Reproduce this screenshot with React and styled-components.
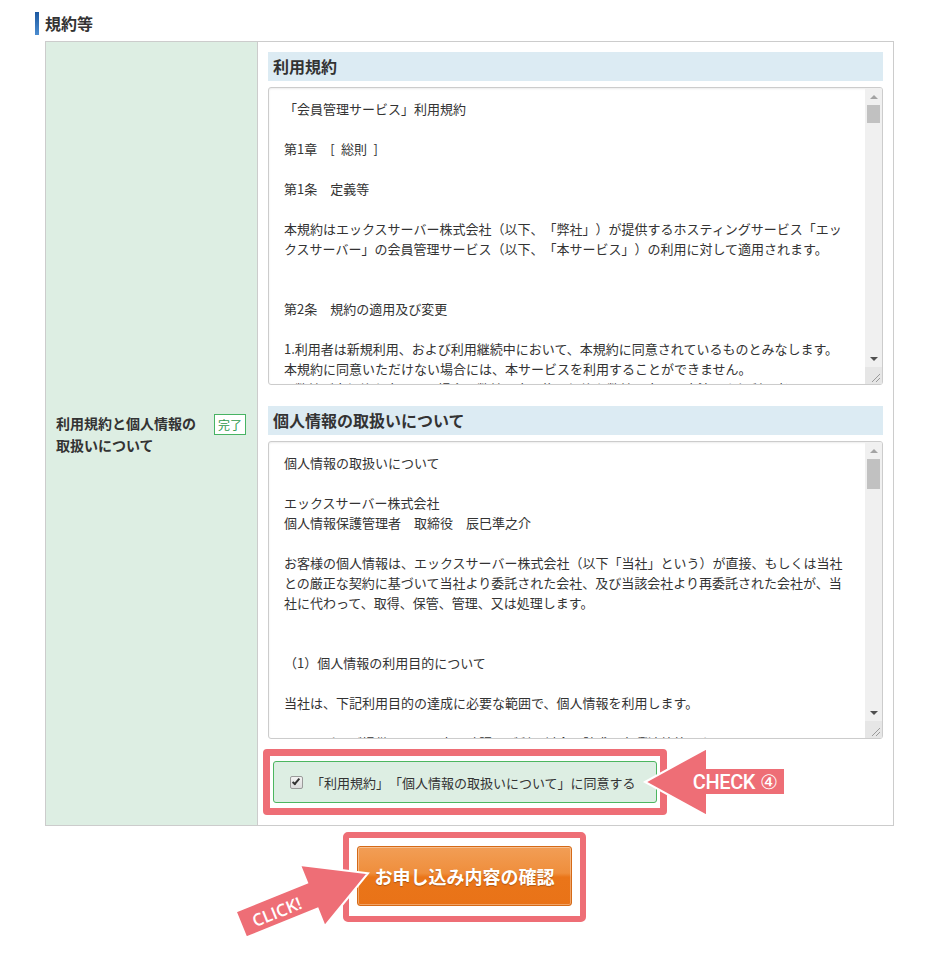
import React from "react";
import styled, { createGlobalStyle } from "styled-components";

const GlobalStyle = createGlobalStyle`
  html, body { margin: 0; padding: 0; background: #fff; }
  body {
    font-family: "Noto Sans CJK JP", "Noto Sans", sans-serif;
    color: #333;
    text-spacing-trim: space-all;
  }
  *, *::before, *::after { box-sizing: border-box; }
`;

const Page = styled.div`
  width: 929px;
  padding: 12px 0 40px;
`;

const SectionTitle = styled.h2`
  margin: 0 0 6px 35px;
  height: 23px;
  display: flex;
  align-items: center;
  gap: 6px;
  font-size: 16px;
  font-weight: bold;
  line-height: 23px;
  color: #333;
  &::before {
    content: "";
    width: 4px;
    height: 23px;
    background: linear-gradient(#1b58a0, #4c8dd0);
  }
`;

const Table = styled.div`
  margin-left: 45px;
  width: 849px;
  display: grid;
  grid-template-columns: 212px 1fr;
  border: 1px solid #ccc;
`;

const LabelCell = styled.div`
  background: #ddeee3;
  border-right: 1px solid #ccc;
  padding: 0 11px 0 10px;
  display: flex;
  align-items: center;
`;

const LabelRow = styled.div`
  flex: 1;
  display: flex;
  align-items: flex-start;
  justify-content: space-between;
`;

const LabelText = styled.div`
  width: 146px;
  font-size: 14px;
  font-weight: bold;
  line-height: 22px;
  color: #333;
`;

const Badge = styled.span`
  margin-top: 2px;
  padding: 0 3px;
  font-size: 12px;
  line-height: 19px;
  color: #2f9a4c;
  border: 1px solid #47b363;
  background: #fff;
`;

const ContentCell = styled.div`
  padding: 10px;
  display: flex;
  flex-direction: column;
`;

const TermsBlock = styled.section`
  display: flex;
  flex-direction: column;
  & + & { margin-top: 21px; }
`;

const BlockTitle = styled.h3`
  margin: 0 0 6px;
  height: 29px;
  padding: 0 5px;
  background: #dcebf3;
  font-size: 16px;
  font-weight: bold;
  line-height: 29px;
  color: #333;
`;

const TextFrame = styled.div`
  display: flex;
  height: 298px;
  border: 1px solid #ccc;
  border-radius: 3px;
  overflow: hidden;
  background: #fff;
  box-shadow: inset 0 1px 2px rgba(0, 0, 0, 0.08);
`;

const TermsText = styled.textarea`
  flex: 1;
  min-width: 0;
  display: block;
  margin: 0;
  padding: 11px 10px 10px 15px;
  border: none;
  font-family: "Noto Sans CJK JP", "Noto Sans", sans-serif;
  font-size: 13px;
  line-height: 20px;
  color: #333;
  background: transparent;
  resize: none;
  outline: none;
  overflow: hidden;
  text-spacing-trim: space-all;
`;

const ScrollBar = styled.div`
  width: 17px;
  display: flex;
  flex-direction: column;
  background: #f0f0f0;
`;

const ScrollArrow = styled.div`
  height: 17px;
  display: flex;
  align-items: center;
  justify-content: center;
  &::before {
    content: "";
    border-left: 4px solid transparent;
    border-right: 4px solid transparent;
    ${(p) =>
      p.$dir === "up"
        ? `border-bottom: 4px solid ${p.$on ? "#505050" : "#a3a3a3"};`
        : `border-top: 4px solid ${p.$on ? "#505050" : "#a3a3a3"};`}
  }
`;

const ScrollThumb = styled.div`
  height: ${(p) => p.$size}px;
  margin: 0 2px;
  background: #c1c1c1;
`;

const ScrollSpace = styled.div`
  flex: 1;
`;

const ResizeCorner = styled.div`
  height: 17px;
  background: #e6e6e6;
  display: flex;
  align-items: flex-end;
  justify-content: flex-end;
`;

const AgreeHighlight = styled.div`
  position: relative;
  align-self: flex-start;
  margin: 10px 0 0 -5px;
  padding: 5px 3px;
  border: 7px solid #ee6e76;
  border-radius: 4px;
  background: #fff;
`;

const AgreeLabel = styled.label`
  display: flex;
  align-items: center;
  gap: 8px;
  height: 42px;
  padding: 0 20px 0 16px;
  background: #ddeee3;
  border: 1px solid #4cb660;
  border-radius: 3px;
  font-size: 13px;
  color: #333;
  white-space: nowrap;
`;

const Check = styled.input`
  appearance: none;
  position: relative;
  margin: 0;
  width: 13px;
  height: 13px;
  border: 1px solid #9a9a9a;
  border-radius: 2px;
  background: linear-gradient(#f2f2f2, #dcdcdc);
  &:checked::after {
    content: "";
    position: absolute;
    left: 3px;
    top: 0px;
    width: 4px;
    height: 8px;
    border: solid #333;
    border-width: 0 2px 2px 0;
    transform: rotate(40deg);
  }
`;

const ActionArea = styled.div`
  display: flex;
  justify-content: center;
  padding-top: 6px;
`;

const ButtonHighlight = styled.div`
  position: relative;
  padding: 8px 8px 10px;
  border: 6px solid #ee6e76;
  border-radius: 5px;
  background: #fff;
`;

const ConfirmButton = styled.button`
  display: block;
  width: 215px;
  height: 60px;
  padding: 0;
  border: 1px solid #d56a17;
  border-radius: 3px;
  background: linear-gradient(#f29e56 0%, #ef8e3c 45%, #ea7519 52%, #e97318 100%);
  box-shadow: inset 0 0 0 1px rgba(255, 255, 255, 0.35);
  color: #fff;
  font-family: "Noto Sans CJK JP", "Noto Sans", sans-serif;
  font-size: 18px;
  font-weight: bold;
  text-shadow: 0 1px 1px rgba(0, 0, 0, 0.25);
  cursor: pointer;
`;

const Callout = styled.svg`
  position: absolute;
  left: ${(p) => p.$left}px;
  top: ${(p) => p.$top}px;
  overflow: visible;
  pointer-events: none;
  z-index: 2;
`;

const CalloutText = styled.text`
  fill: #fff;
  font-family: ${(p) => p.$font};
  font-size: ${(p) => p.$size}px;
  font-weight: ${(p) => p.$weight};
  letter-spacing: ${(p) => p.$ls || 0}px;
`;

const TERMS_HEAD = `「会員管理サービス」利用規約

第1章　[\u2002総則\u2002]

第1条　定義等

本規約はエックスサーバー株式会社（以下、「弊社」）が提供するホスティングサービス「エッ
クスサーバー」の会員管理サービス（以下、「本サービス」）の利用に対して適用されます。


第2条　規約の適用及び変更

1.利用者は新規利用、および利用継続中において、本規約に同意されているものとみなします。
本規約に同意いただけない場合には、本サービスを利用することができません。
2.弊社が本規約を変更する場合、弊社は変更後の規約を弊社の定める方法により利用者に
通知するものとします。
3.変更後の規約は、前項の通知がなされた時点より効力を生じるものとします。
`;

const ARTICLE_TITLES = [
  "会員管理サービス",
  "会員ID及びパスワードの管理",
  "登録情報の変更",
  "料金及び支払方法",
  "禁止事項",
  "サービスの停止",
  "サービスの変更及び廃止",
  "免責事項",
  "損害賠償",
  "個人情報の取扱い",
  "通知方法",
  "権利義務の譲渡禁止",
  "契約の解除",
  "反社会的勢力の排除",
  "準拠法及び管轄裁判所",
];

const TERMS =
  TERMS_HEAD +
  ARTICLE_TITLES.map(
    (t, i) => `

第${i + 3}条　${t}

1.利用者は、本条に定める事項を遵守し、弊社の定める手続きに従うものとします。
2.弊社は、必要と判断した場合、利用者に対し事前に通知することなく、
本条に定める内容を変更することができるものとします。
3.前各項に定めのない事項については、弊社が別途定めるところによるものとします。
4.利用者が本条に違反した場合、弊社は本サービスの利用を停止することができます。`
  ).join("") +
  `


附則
本規約は、2015年4月1日より施行します。
`;

const PRIVACY_HEAD = `個人情報の取扱いについて

エックスサーバー株式会社
個人情報保護管理者　取締役　辰巳準之介

お客様の個人情報は、エックスサーバー株式会社（以下「当社」という）が直接、もしくは当社
との厳正な契約に基づいて当社より委託された会社、及び当該会社より再委託された会社が、当
社に代わって、取得、保管、管理、又は処理します。


（1）個人情報の利用目的について

当社は、下記利用目的の達成に必要な範囲で、個人情報を利用します。

・サービスご提供に関する本人確認、ご利用料金の請求、各種連絡等のため
・サービスに関するお問い合わせ、ご相談への対応のため
・新サービスや機能追加等に関する情報提供のため
`;

const PRIVACY_SECTIONS = [
  "個人情報の第三者提供について",
  "個人情報の委託について",
  "個人情報の開示等の請求について",
  "個人情報を提供されることの任意性について",
  "本人が容易に認識できない方法による個人情報の取得",
  "お問い合わせ窓口",
];

const PRIVACY =
  PRIVACY_HEAD +
  PRIVACY_SECTIONS.map(
    (t, i) => `


（${i + 2}）${t}

当社は、法令に定める場合を除き、お客様の同意なく個人情報を第三者に提供しません。
お客様は、当社に対してご自身の個人情報の開示等の請求を行うことができます。
請求にあたっては、当社所定の手続きに従い、ご本人であることを確認させていただきます。`
  ).join("") +
  `
`;

function ScrollText({ value, thumb }) {
  return (
    <TextFrame>
      <TermsText readOnly value={value} />
      <ScrollBar aria-hidden="true">
        <ScrollArrow $dir="up" />
        <ScrollThumb $size={thumb} />
        <ScrollSpace />
        <ScrollArrow $dir="down" $on />
        <ResizeCorner>
          <svg width="17" height="17" viewBox="0 0 17 17">
            <path d="M15 7 L7 15 M15 11 L11 15" stroke="#9a9a9a" strokeWidth="1" fill="none" />
          </svg>
        </ResizeCorner>
      </ScrollBar>
    </TextFrame>
  );
}

function ClickArrow() {
  return (
    <Callout $left={-119} $top={18} width="150" height="95" viewBox="0 0 150 95">
      <g transform="translate(11 68.5) rotate(-22)">
        <polygon
          points="0,-14 77,-14 77,-33 137,0 77,33 77,14 0,14"
          fill="#ee6e76"
          stroke="#fff"
          strokeWidth="2"
        />
        <CalloutText
          x="38"
          y="1.5"
          textAnchor="middle"
          dominantBaseline="central"
          $font={'"Open Sans", "Liberation Sans", sans-serif'}
          $size={17}
          $weight={600}
        >
          CLICK!
        </CalloutText>
      </g>
    </Callout>
  );
}

function CheckArrow() {
  return (
    <Callout $left={370} $top={-10} width="150" height="72" viewBox="0 0 150 72">
      <polygon
        points="5,36 67,2 67,22 145,22 145,49 67,49 67,70"
        fill="#ee6e76"
        stroke="#fff"
        strokeWidth="2"
      />
      <CalloutText
        x="95"
        y="36"
        textAnchor="middle"
        dominantBaseline="central"
        $font={'"Liberation Sans Narrow", "Roboto", sans-serif'}
        $size={20}
        $weight={500}
        $ls={-0.4}
      >
        CHECK ④
      </CalloutText>
    </Callout>
  );
}

export default function App() {
  return (
    <Page>
      <GlobalStyle />
      <SectionTitle>規約等</SectionTitle>
      <Table>
        <LabelCell>
          <LabelRow>
            <LabelText>利用規約と個人情報の取扱いについて</LabelText>
            <Badge>完了</Badge>
          </LabelRow>
        </LabelCell>
        <ContentCell>
          <TermsBlock>
            <BlockTitle>利用規約</BlockTitle>
            <ScrollText value={TERMS} thumb={18} />
          </TermsBlock>
          <TermsBlock>
            <BlockTitle>個人情報の取扱いについて</BlockTitle>
            <ScrollText value={PRIVACY} thumb={30} />
          </TermsBlock>
          <AgreeHighlight>
            <AgreeLabel>
              <Check type="checkbox" checked readOnly />
              「利用規約」「個人情報の取扱いについて」に同意する
            </AgreeLabel>
            <CheckArrow />
          </AgreeHighlight>
        </ContentCell>
      </Table>
      <ActionArea>
        <ButtonHighlight>
          <ConfirmButton type="button">お申し込み内容の確認</ConfirmButton>
          <ClickArrow />
        </ButtonHighlight>
      </ActionArea>
    </Page>
  );
}
